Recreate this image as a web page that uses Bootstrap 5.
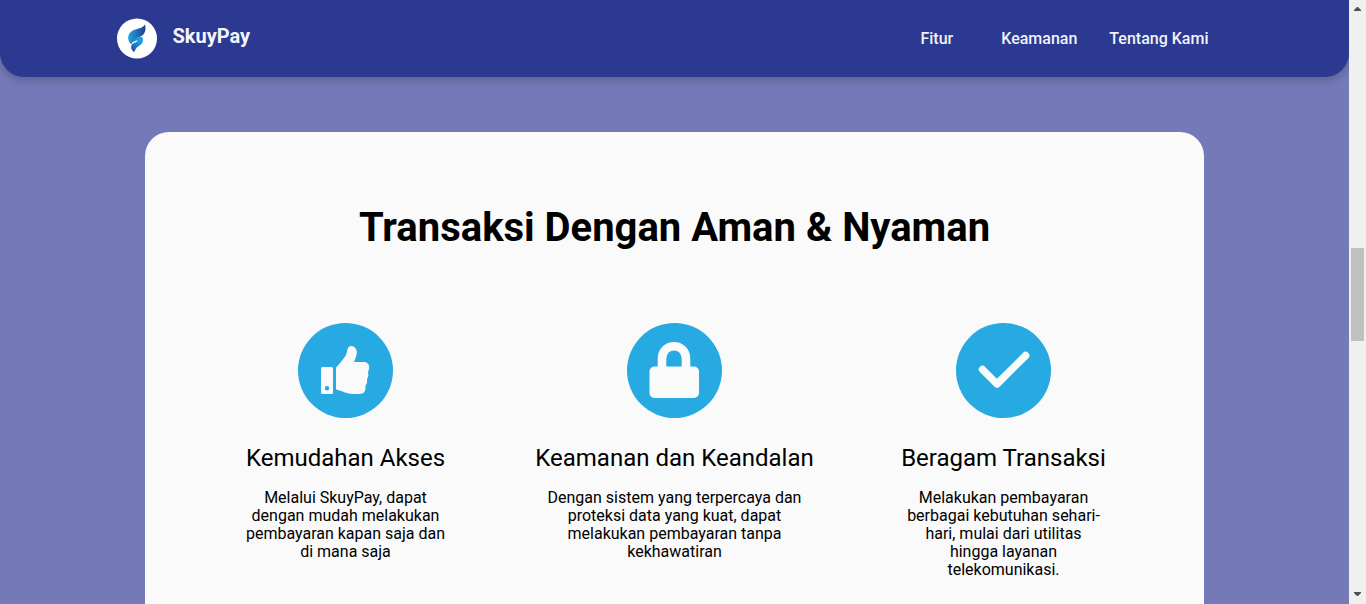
<!DOCTYPE html>
<html lang="id">
<head>
<meta charset="utf-8">
<meta name="viewport" content="width=device-width, initial-scale=1">
<title>SkuyPay</title>
<link rel="stylesheet" href="https://cdn.jsdelivr.net/npm/bootstrap@5.3.0/dist/css/bootstrap.min.css">
<style>
  body { font-family: Roboto, "Liberation Sans", sans-serif; background: #737ab7; color: #000; }
  .site-nav { background: #2b3990; border-radius: 0 0 24px 24px; box-shadow: 0 4px 8px rgba(0, 0, 0, .18); padding: 18px 0; }
  .brand-name { font-size: 20px; line-height: 24px; font-weight: 700; color: #f4f5fb; padding-bottom: 6px; }
  .site-nav .nav-link { font-size: 16px; line-height: 24px; font-weight: 500; color: #f1f2fa; padding: 8px 0; }
  .panel { background: #fafafa; border-radius: 24px 24px 0 0; width: 1059px; max-width: 94%; margin-top: 55px; padding: 72px 36px; }
  .panel-title { font-size: 40px; line-height: 48px; font-weight: 700; margin-bottom: 71px; }
  .feature-title { font-size: 24px; line-height: 28px; font-weight: 400; margin: 26px 0 17px; }
  .feature-text { font-size: 16px; line-height: 18px; max-width: 204px; }
  .feature-text.wide { max-width: 278px; }
  .scroll-rail { width: 17px; background: #f0f0f0; padding: 7px 0; }
  .scroll-thumb { width: 13px; height: 93px; background: #c0c0c0; margin-top: 236px; }
</style>
</head>
<body>
<div class="d-flex vh-100 overflow-hidden">
  <div class="flex-grow-1 overflow-hidden d-flex flex-column">
    <header class="site-nav flex-shrink-0">
      <nav class="container d-flex align-items-center justify-content-between">
        <a href="#" class="d-flex align-items-center text-decoration-none">
          <svg width="40" height="41" viewBox="0 0 40 41" role="img" aria-label="Logo SkuyPay">
            <defs>
              <linearGradient id="wing" x1="0" y1="0" x2="1" y2="0"><stop offset="0" stop-color="#25a7df"/><stop offset=".45" stop-color="#1d78bd"/><stop offset="1" stop-color="#253a8e"/></linearGradient>
              <linearGradient id="tail" x1="0" y1="1" x2="1" y2="0"><stop offset="0" stop-color="#29479b"/><stop offset=".5" stop-color="#1c84c8"/><stop offset="1" stop-color="#29b0e6"/></linearGradient>
            </defs>
            <circle cx="20" cy="20.500" r="20" fill="#fff"/>
            <path fill="url(#wing)" d="M28 6.500C29.300 12 28 16.500 23.500 18.500C19 20.300 15.500 21.500 14.500 26.500C10.500 23.500 9.800 17.500 14 13.800C18.500 10 25 11.500 28 6.500Z"/>
            <path fill="url(#tail)" d="M25.500 19C27.300 23.500 25 26.200 21.500 28.200C18.800 29.800 18.500 31.800 17.100 34.300C14 31.800 13.400 28.500 15 26.500C17 24.300 20 24.500 20.800 22.500C18.500 22.300 16.500 23.500 14.800 25C15 19.800 21 18.600 25.500 19Z"/>
          </svg>
          <span class="brand-name ms-3">SkuyPay</span>
        </a>
        <div class="d-flex me-4 pe-0">
          <a class="nav-link me-5" href="#fitur">Fitur</a>
          <a class="nav-link" href="#keamanan">Keamanan</a>
          <a class="nav-link ms-4 ps-2" href="#tentang">Tentang Kami</a>
        </div>
      </nav>
    </header>
    <main class="panel mx-auto flex-grow-1 text-center" id="fitur">
      <h1 class="panel-title">Transaksi Dengan Aman &amp; Nyaman</h1>
      <div class="row g-0">
        <section class="col-4">
          <svg width="95" height="95" viewBox="0 0 95 95" aria-hidden="true">
            <circle cx="47.500" cy="47.500" r="47.500" fill="#27aae1"/>
            <path fill="#fafafa" fill-rule="evenodd" d="M25 44H33.500Q35 44 35 45.500V69.500Q35 71 33.500 71H24.500Q23 71 23 69.500V45.500Q23 44 24.500 44ZM29 63A2.200 2.200 0 1 0 29 67.400A2.200 2.200 0 1 0 29 63Z"/>
            <path fill="#fafafa" d="M38 44.500C41 41.500 45 36.500 47.500 33C49 30 49 27 50 25C52 22 56 22.500 58 26C60 30.500 57.500 35 56 39H66.500C70 39.500 72 42.500 71 46C70.800 48 70 48.500 69.800 49.500C70.800 52 70.500 54 69 56C69.300 59 69 61 67.500 62.500C67.800 68 66.500 71 61 71H55C48.500 71 43.500 67.500 38 66.500Z"/>
          </svg>
          <h2 class="feature-title">Kemudahan Akses</h2>
          <p class="feature-text mx-auto">Melalui SkuyPay, dapat dengan mudah melakukan pembayaran kapan saja dan di mana saja</p>
        </section>
        <section class="col-4" id="keamanan">
          <svg width="95" height="95" viewBox="0 0 95 95" aria-hidden="true">
            <circle cx="47.500" cy="47.500" r="47.500" fill="#27aae1"/>
            <path fill="none" stroke="#fafafa" stroke-width="8.600" d="M35 45V36C35 19 59 19 59 36V45"/>
            <rect x="22.500" y="43.500" width="49.500" height="31.500" rx="5" fill="#fafafa"/>
          </svg>
          <h2 class="feature-title">Keamanan dan Keandalan</h2>
          <p class="feature-text wide mx-auto">Dengan sistem yang terpercaya dan proteksi data yang kuat, dapat melakukan pembayaran tanpa kekhawatiran</p>
        </section>
        <section class="col-4">
          <svg width="95" height="95" viewBox="0 0 95 95" aria-hidden="true">
            <circle cx="47.500" cy="47.500" r="47.500" fill="#27aae1"/>
            <path fill="none" stroke="#fafafa" stroke-width="7.400" stroke-linecap="round" stroke-linejoin="round" d="M26.500 46.500L41 61L69.700 32.500"/>
          </svg>
          <h2 class="feature-title">Beragam Transaksi</h2>
          <p class="feature-text mx-auto">Melakukan pembayaran berbagai kebutuhan sehari-hari, mulai dari utilitas hingga layanan telekomunikasi.</p>
        </section>
      </div>
    </main>
  </div>
  <div class="scroll-rail flex-shrink-0 d-flex flex-column align-items-center" aria-hidden="true">
    <svg width="9" height="5" viewBox="0 0 9 5"><path fill="#505050" d="M4 0H5L8 3V4H1V3Z"/></svg>
    <div class="scroll-thumb"></div>
    <svg class="mt-auto" width="9" height="5" viewBox="0 0 9 5"><path fill="#505050" d="M1 0H8V1L5 4H4L1 1Z"/></svg>
  </div>
</div>
<script src="https://cdn.jsdelivr.net/npm/bootstrap@5.3.0/dist/js/bootstrap.bundle.min.js"></script>
</body>
</html>
